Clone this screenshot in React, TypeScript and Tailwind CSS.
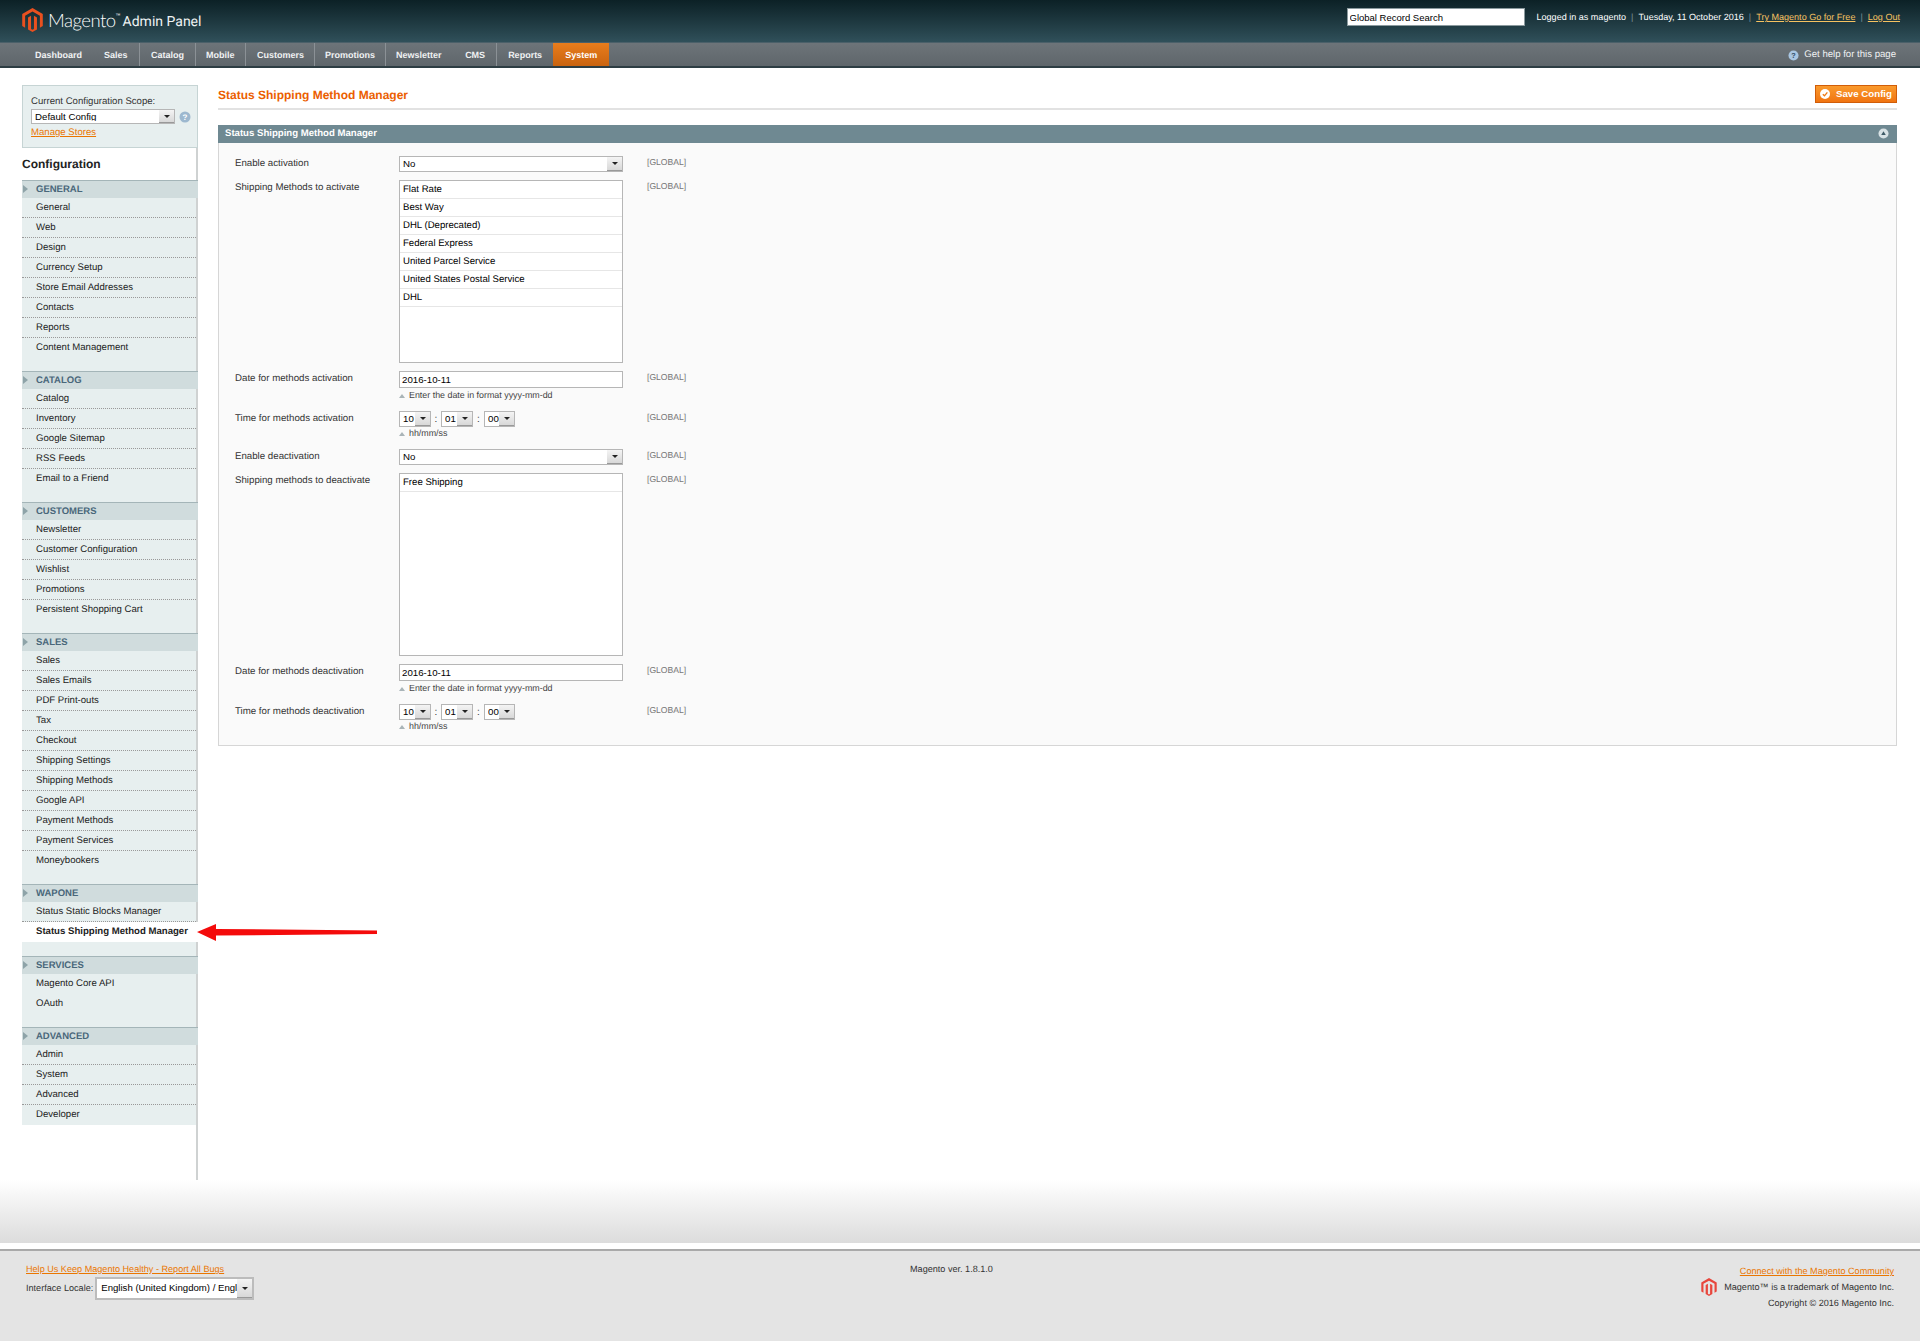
import { Fragment } from 'react';

const navItems = [
  { label: 'Dashboard', ml: 'ml-[35px]', sep: '' },
  { label: 'Sales', ml: 'ml-[22px]', sep: 'ml-[11.5px]' },
  { label: 'Catalog', ml: 'ml-[11px]', sep: 'ml-[11px]' },
  { label: 'Mobile', ml: 'ml-[10px]', sep: 'ml-[10.5px]' },
  { label: 'Customers', ml: 'ml-[11px]', sep: 'ml-[10px]' },
  { label: 'Promotions', ml: 'ml-[10px]', sep: 'ml-[10px]' },
  { label: 'Newsletter', ml: 'ml-[10px]', sep: '' },
  { label: 'CMS', ml: 'ml-[23.5px]', sep: 'ml-[11px]' },
  { label: 'Reports', ml: 'ml-[11px]', sep: '' },
];

const menu = [
  {
    title: 'General',
    items: ['General', 'Web', 'Design', 'Currency Setup', 'Store Email Addresses', 'Contacts', 'Reports', 'Content Management'],
  },
  { title: 'Catalog', items: ['Catalog', 'Inventory', 'Google Sitemap', 'RSS Feeds', 'Email to a Friend'] },
  { title: 'Customers', items: ['Newsletter', 'Customer Configuration', 'Wishlist', 'Promotions', 'Persistent Shopping Cart'] },
  {
    title: 'Sales',
    items: [
      'Sales',
      'Sales Emails',
      'PDF Print-outs',
      'Tax',
      'Checkout',
      'Shipping Settings',
      'Shipping Methods',
      'Google API',
      'Payment Methods',
      'Payment Services',
      'Moneybookers',
    ],
  },
  { title: 'Wapone', items: ['Status Static Blocks Manager', 'Status Shipping Method Manager'], tall: true },
  { title: 'Services', items: ['Magento Core API', 'OAuth'], plain: true },
  { title: 'Advanced', items: ['Admin', 'System', 'Advanced', 'Developer'], last: true },
];

const activeItem = 'Status Shipping Method Manager';

function MagentoLogo({ className, fill }: { className: string; fill: string }) {
  return (
    <svg viewBox="0 0 24 28" className={className} fill={fill}>
      <path d="M12 0 24 7v14l-3.4 2V9L12 4.2 3.4 9v14L0 21V7z" />
      <path d="M6.8 11 10.3 9v15.5l1.7 1 1.7-1V9l3.5 2v14L12 28l-5.2-3z" />
    </svg>
  );
}

function Arrow() {
  return (
    <span className="absolute right-0 top-0 bottom-0 w-[15px] flex items-center justify-center bg-gradient-to-b from-[#f4f4f4] to-[#d8d8d8] border-b border-[#999] pointer-events-none">
      <span className="w-0 h-0 border-l-[3px] border-r-[3px] border-t-[3px] border-l-transparent border-r-transparent border-t-[#222]" />
    </span>
  );
}

function Select({ value, className }: { value: string; className: string }) {
  return (
    <div className={`relative bg-white border border-[#b6b6b6] ${className}`}>
      <select
        defaultValue={value}
        className="block w-full h-full appearance-none bg-white pl-[3px] text-[9.7px] leading-none text-black outline-none"
      >
        <option>{value}</option>
      </select>
      <Arrow />
    </div>
  );
}

function MultiSelect({ options }: { options: string[] }) {
  return (
    <div className="w-[224px] h-[183px] bg-white border border-[#b6b6b6]">
      {options.map((option) => (
        <div key={option} className="h-[18px] pl-[3px] border-b border-[#e6e6e6] text-[9.6px] leading-[17px] text-black">
          {option}
        </div>
      ))}
    </div>
  );
}

function Hint({ children, short }: { children: string; short?: boolean }) {
  return (
    <div className={`flex items-center ${short ? 'h-[14px]' : 'h-[15px]'} text-[8.9px] text-[#444]`}>
      <span className="w-0 h-0 mr-[4px] border-l-[3px] border-r-[3px] border-b-[4px] border-l-transparent border-r-transparent border-b-[#a9b4b8]" />
      {children}
    </div>
  );
}

function TimeSelects() {
  return (
    <div className="flex items-center h-[16px] text-[10px] text-[#333]">
      <Select value="10" className="w-[32px] h-[16px]" />
      <span className="w-[10px] text-center">:</span>
      <Select value="01" className="w-[32px] h-[16px]" />
      <span className="w-[11px] text-center">:</span>
      <Select value="00" className="w-[31px] h-[16px]" />
    </div>
  );
}

function Row({ label, children }: { label: string; children: React.ReactNode }) {
  return (
    <div className="flex items-start mb-[8px]">
      <label className="w-[164px] text-[9.7px] leading-[16px] text-[#333]">{label}</label>
      <div className="w-[224px]">{children}</div>
      <span className="ml-[24px] text-[8.6px] leading-[13px] text-[#777]">[GLOBAL]</span>
    </div>
  );
}

function Sidebar() {
  return (
    <aside className="w-[176px] h-[1095px] ml-[22px] shrink-0 border-r-2 border-[#cfd2d2] text-[9.6px]">
      <div className="h-[63px] -mr-[2px] bg-[#e7efef] border border-[#c6d4d4] pt-[9px] pl-[8px]">
        <div className="leading-[13px] text-[#333]">Current Configuration Scope:</div>
        <div className="flex items-center mt-[1px]">
          <Select value="Default Config" className="w-[144px] h-[15px]" />
          <svg viewBox="0 0 12 12" className="w-[12px] h-[12px] ml-[4px]">
            <circle cx="6" cy="6" r="5.5" fill="#9db8cf" />
            <text x="6" y="9" textAnchor="middle" fontSize="8" fontWeight="700" fill="#fff" fontFamily="Liberation Sans">?</text>
          </svg>
        </div>
        <a href="#" className="block mt-[2px] leading-[13px] text-[#ea7601] underline">Manage Stores</a>
      </div>
      <h3 className="h-[32px] text-[12px] font-bold leading-[33px] text-[#222] bg-white">Configuration</h3>
      {menu.map((group) => (
        <div key={group.title} className="-mr-[2px] border-t border-[#a4b5b8]">
          <div className="relative h-[17px] bg-[#d0dcdd] pl-[14px] text-[9.5px] font-bold uppercase leading-[17px] text-[#49677a]">
            <span className="absolute left-[1px] top-[4px] w-0 h-0 border-t-[4px] border-b-[4px] border-l-[5px] border-t-transparent border-b-transparent border-l-[#8ea3a8]" />
            {group.title}
          </div>
          <div className={`bg-[#e7efef] border-r-2 border-[#cfd2d2] ${group.last ? '' : group.tall ? 'pb-[14px]' : 'pb-[13px]'}`}>
            {group.items.map((item, i) => {
              const active = item === activeItem;
              const dotted = i < group.items.length - 1 && !group.plain;
              return (
                <a
                  key={item}
                  href="#"
                  className={`block h-[20px] pl-[14px] leading-[20px] text-[#222] ${active ? 'bg-white font-bold -mr-[2px]' : ''} ${dotted ? 'border-b border-dotted border-[#999]' : ''}`}
                >
                  {item}
                </a>
              );
            })}
          </div>
        </div>
      ))}
    </aside>
  );
}

export default function App() {
  return (
    <div className="relative min-h-[1341px] bg-white font-['Liberation_Sans',Arial,sans-serif] [text-rendering:geometricPrecision]">
      <header className="h-[43px] flex items-start bg-gradient-to-b from-[#0c2126] to-[#30505a] border-b border-[#4b6069]">
        <MagentoLogo className="w-[21px] h-[24px] ml-[22px] mt-[8px]" fill="#e9501f" />
        <span className="ml-[5px] mt-[7px] font-['Lato',sans-serif] font-light text-[18.5px] leading-[26px] tracking-[-0.5px] text-white">Magento</span>
        <span className="text-[5px] mt-[13px] text-white">™</span>
        <span className="ml-[2px] mt-[13px] font-['Roboto',sans-serif] text-[14px] leading-[18px] text-[#eef2f3]">Admin Panel</span>
        <div className="ml-auto mr-[20px] mt-[8px] flex items-center h-[18px] text-[9.05px] text-white">
          <input
            defaultValue="Global Record Search"
            className="w-[178px] h-[18px] mr-[12px] bg-white border border-[#8b9a9e] pl-[2px] text-[9.5px] text-black outline-none"
          />
          <div className="flex items-center mt-[1px]">
            <span className="font-medium">Logged in as magento</span>
            <span className="mx-[5px] text-[#7d9098]">|</span>
            <span>Tuesday, 11 October 2016</span>
            <span className="mx-[5px] text-[#7d9098]">|</span>
            <a href="#" className="text-[#f6c261] underline">Try Magento Go for Free</a>
            <span className="mx-[5px] text-[#7d9098]">|</span>
            <a href="#" className="text-[#f6c261] underline">Log Out</a>
          </div>
        </div>
      </header>

      <nav className="h-[25px] flex items-stretch bg-gradient-to-b from-[#6d7479] to-[#5f666b] border-b-2 border-[#2d3d43] text-[9px] font-bold text-[#f0f2f3]">
        {navItems.map((item) => (
          <Fragment key={item.label}>
            <a href="#" className={`${item.ml} leading-[24px]`}>{item.label}</a>
            {item.sep && <span className={`${item.sep} w-px bg-[#8b9196]`} />}
          </Fragment>
        ))}
        <a href="#" className="ml-[11px] w-[56px] text-center leading-[24px] text-white bg-gradient-to-b from-[#e87d1c] to-[#c9630f]">System</a>
        <a href="#" className="ml-auto mr-[24px] flex items-center pt-[1px] font-normal text-[9.6px]">
          <svg viewBox="0 0 12 12" className="w-[11px] h-[11px] mr-[5px]">
            <circle cx="6" cy="6" r="5.5" fill="#a9c6e2" />
            <text x="6" y="9" textAnchor="middle" fontSize="8" fontWeight="700" fill="#35506a" fontFamily="Liberation Sans">?</text>
          </svg>
          Get help for this page
        </a>
      </nav>

      <main className="flex items-start pt-[17px]">
        <Sidebar />
        <section className="flex-1 ml-[20px] mr-[23px]">
          <div className="flex items-start justify-between h-[25px] border-b-2 border-[#e2e2e2]">
            <h1 className="text-[12px] font-bold leading-[21px] text-[#eb5e00]">Status Shipping Method Manager</h1>
            <button className="h-[18px] w-[82px] flex items-center justify-center bg-gradient-to-b from-[#fa9a2c] to-[#f07410] border border-[#d15d08] text-[9.7px] font-bold text-white">
              <svg viewBox="0 0 12 12" className="w-[10px] h-[10px] mr-[6px]">
                <circle cx="6" cy="6" r="6" fill="#fff" />
                <path d="M3.4 6.2 5.4 8.2 8.8 4" fill="none" stroke="#ee7a16" strokeWidth="1.6" />
              </svg>
              Save Config
            </button>
          </div>
          <div className="mt-[15px] h-[18px] flex items-center justify-between bg-[#6f8992] pl-[7px] pr-[8px] pt-[1px] text-[9.6px] font-bold text-white">
            Status Shipping Method Manager
            <svg viewBox="0 0 12 12" className="w-[11px] h-[11px] -mt-[2px]">
              <circle cx="6" cy="6" r="5.5" fill="#d8e2e5" />
              <path d="M6 3.5 8.5 7.5H3.5z" fill="#3e5a66" />
            </svg>
          </div>
          <div className="h-[603px] bg-[#fafafa] border border-t-0 border-[#d6d6d6] pt-[13px] pl-[16px]">
            <Row label="Enable activation"><Select value="No" className="w-[224px] h-[16px]" /></Row>
            <Row label="Shipping Methods to activate">
              <MultiSelect options={['Flat Rate', 'Best Way', 'DHL (Deprecated)', 'Federal Express', 'United Parcel Service', 'United States Postal Service', 'DHL']} />
            </Row>
            <Row label="Date for methods activation">
              <input defaultValue="2016-10-11" className="block w-[224px] h-[17px] bg-white border border-[#b6b6b6] pl-[2px] text-[9.7px] text-black outline-none" />
              <Hint>Enter the date in format yyyy-mm-dd</Hint>
            </Row>
            <Row label="Time for methods activation">
              <TimeSelects />
              <Hint short>hh/mm/ss</Hint>
            </Row>
            <Row label="Enable deactivation"><Select value="No" className="w-[224px] h-[16px]" /></Row>
            <Row label="Shipping methods to deactivate"><MultiSelect options={['Free Shipping']} /></Row>
            <Row label="Date for methods deactivation">
              <input defaultValue="2016-10-11" className="block w-[224px] h-[17px] bg-white border border-[#b6b6b6] pl-[2px] text-[9.7px] text-black outline-none" />
              <Hint>Enter the date in format yyyy-mm-dd</Hint>
            </Row>
            <Row label="Time for methods deactivation">
              <TimeSelects />
              <Hint short>hh/mm/ss</Hint>
            </Row>
          </div>
        </section>
      </main>

      <div className="h-[63px] bg-gradient-to-b from-white to-[#dcdcdc]" />
      <div className="h-[6px] bg-white" />
      <footer className="h-[92px] flex bg-[#e4e4e4] border-t-2 border-[#a9a9a9] text-[9.1px] text-[#333]">
        <div className="w-[910px] pl-[26px] pt-[12px]">
          <a href="#" className="block leading-[13px] text-[#ea7601] underline">Help Us Keep Magento Healthy - Report All Bugs</a>
          <div className="flex items-center mt-[1px]">
            <span>Interface Locale:</span>
            <div className="relative w-[159px] h-[23px] ml-[2px] bg-white border-2 border-[#bcbcbc]">
              <select defaultValue="English" className="block w-[145px] h-full appearance-none overflow-hidden bg-white pl-[4px] text-[9.6px] text-black outline-none">
                <option value="English">English (United Kingdom) / English (United Kingdom)</option>
              </select>
              <Arrow />
            </div>
          </div>
        </div>
        <div className="flex-1 pt-[12px] leading-[13px]">Magento ver. 1.8.1.0</div>
        <div className="pr-[26px] pt-[12px] text-right leading-[16px]">
          <a href="#" className="block text-[#ea7601] underline">Connect with the Magento Community</a>
          <div className="flex items-center justify-end h-[16px]">
            <MagentoLogo className="w-[16px] h-[18px] mr-[7px]" fill="#e8463c" />
            Magento™ is a trademark of Magento Inc.
          </div>
          <div>Copyright © 2016 Magento Inc.</div>
        </div>
      </footer>

      {/* annotation arrow from the original screenshot */}
      <svg className="absolute left-[196px] top-[922px] w-[184px] h-[22px]" viewBox="0 0 184 22">
        <path d="M1 10 20 2v5l161 1.5v3.5L20 13.5V19z" fill="#f40b0b" />
      </svg>
    </div>
  );
}
